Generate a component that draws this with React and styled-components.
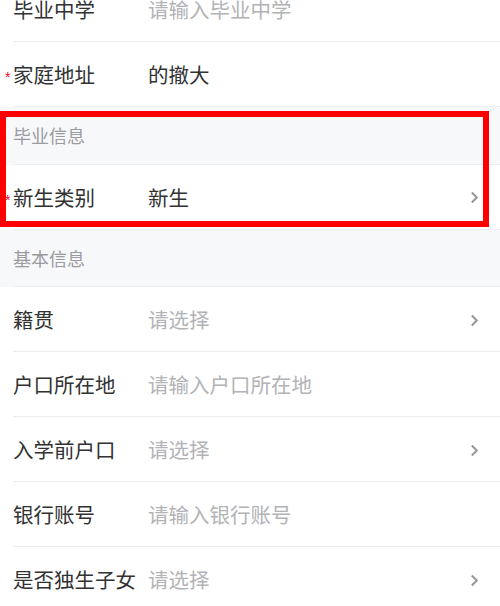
import styled, { createGlobalStyle } from "styled-components";

const GlobalStyle = createGlobalStyle`
  body {
    margin: 0;
    background: #fff;
    font-family: "Noto Sans CJK SC", "Noto Sans", sans-serif;
    overflow: hidden;
  }
`;

const basicFields = [
  { label: "籍贯", placeholder: "请选择", arrow: true },
  { label: "户口所在地", placeholder: "请输入户口所在地" },
  { label: "入学前户口", placeholder: "请选择", arrow: true },
  { label: "银行账号", placeholder: "请输入银行账号" },
  { label: "是否独生子女", placeholder: "请选择", arrow: true },
];

function Chevron() {
  return (
    <ArrowIcon viewBox="0 0 9 13" width="9" height="13">
      <path d="M1.8 1.5 L6.8 6.5 L1.8 11.5" fill="none" stroke="#969799" strokeWidth="2" />
    </ArrowIcon>
  );
}

function Field({ label, value, placeholder, required, arrow }) {
  return (
    <Row>
      <RowInner>
        {required && <Star>*</Star>}
        <Label>{label}</Label>
        <Value $empty={!value}>{value || placeholder}</Value>
        {arrow && <Chevron />}
      </RowInner>
    </Row>
  );
}

export default function App() {
  return (
    <>
      <GlobalStyle />
      <List>
        <Field label="毕业中学" placeholder="请输入毕业中学" />
        <Field label="家庭地址" value="的撤大" required />
        <Highlight>
          <SectionTitle>
            <SectionInner>毕业信息</SectionInner>
          </SectionTitle>
          <Field label="新生类别" value="新生" required arrow />
        </Highlight>
        <SectionTitle>
          <SectionInner>基本信息</SectionInner>
        </SectionTitle>
        {basicFields.map((f) => (
          <Field key={f.label} {...f} />
        ))}
      </List>
    </>
  );
}

const List = styled.div`
  margin-top: -23px;
  display: flex;
  flex-direction: column;
`;

const Row = styled.div`
  padding-left: 13px;
  background: #fff;
`;

const RowInner = styled.div`
  position: relative;
  display: flex;
  align-items: center;
  height: 64px;
  padding-right: 21px;
  border-bottom: 1px solid #ebedf0;
`;

const Star = styled.span`
  position: absolute;
  left: -8px;
  top: 28px;
  color: #ee0a24;
  font-size: 14px;
  line-height: 1;
  font-family: "Liberation Sans", sans-serif;
`;

const Label = styled.span`
  width: 135px;
  flex-shrink: 0;
  font-size: 20.5px;
  color: #323233;
  white-space: nowrap;
`;

const Value = styled.span`
  flex: 1;
  font-size: 20.5px;
  color: ${(p) => (p.$empty ? "#b2b3b6" : "#323233")};
  white-space: nowrap;
`;

const ArrowIcon = styled.svg`
  flex-shrink: 0;
  margin-top: 2px;
`;

const SectionTitle = styled.div`
  padding-left: 13px;
  background: #f7f8fa;
`;

const SectionInner = styled.div`
  display: flex;
  align-items: center;
  height: 56.5px;
  font-size: 18px;
  color: #9a9b9e;
  border-bottom: 1px solid #ebedf0;
`;

const Highlight = styled.div`
  position: relative;

  &::after {
    content: "";
    position: absolute;
    top: 4px;
    left: 0;
    right: 11px;
    bottom: 3px;
    border: 6px solid #ff0000;
    pointer-events: none;
  }
`;
